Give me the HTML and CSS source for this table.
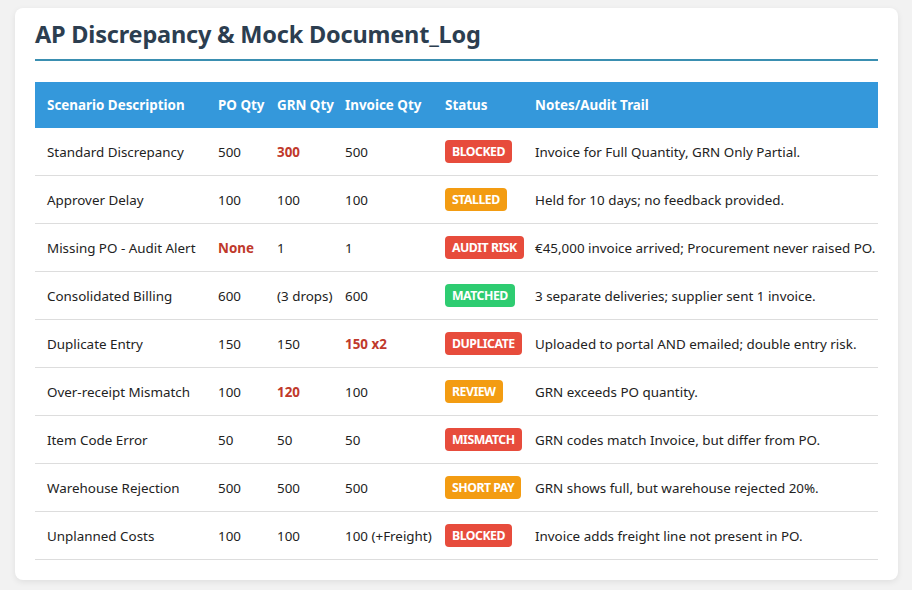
FILE: index.html
```html
<!DOCTYPE html>
<html>
<head>
<meta charset="utf-8">
<link rel="stylesheet" href="styles.css">
</head>
<body>
<div class="card">
  <h1 class="title">AP Discrepancy &amp; Mock Document_Log</h1>
  <table class="log">
    <colgroup>
      <col class="c-desc"><col class="c-po"><col class="c-grn"><col class="c-inv"><col class="c-status"><col class="c-notes">
    </colgroup>
    <thead>
      <tr><th>Scenario Description</th><th>PO Qty</th><th>GRN Qty</th><th>Invoice Qty</th><th>Status</th><th>Notes/Audit Trail</th></tr>
    </thead>
    <tbody>
      <tr><td>Standard Discrepancy</td><td>500</td><td class="alert">300</td><td>500</td><td><span class="badge red">BLOCKED</span></td><td>Invoice for Full Quantity, GRN Only Partial.</td></tr>
      <tr><td>Approver Delay</td><td>100</td><td>100</td><td>100</td><td><span class="badge orange">STALLED</span></td><td>Held for 10 days; no feedback provided.</td></tr>
      <tr><td>Missing PO - Audit Alert</td><td class="alert">None</td><td>1</td><td>1</td><td><span class="badge red">AUDIT RISK</span></td><td>€45,000 invoice arrived; Procurement never raised PO.</td></tr>
      <tr><td>Consolidated Billing</td><td>600</td><td>(3 drops)</td><td>600</td><td><span class="badge green">MATCHED</span></td><td>3 separate deliveries; supplier sent 1 invoice.</td></tr>
      <tr><td>Duplicate Entry</td><td>150</td><td>150</td><td class="alert">150 x2</td><td><span class="badge red">DUPLICATE</span></td><td>Uploaded to portal AND emailed; double entry risk.</td></tr>
      <tr><td>Over-receipt Mismatch</td><td>100</td><td class="alert">120</td><td>100</td><td><span class="badge orange">REVIEW</span></td><td>GRN exceeds PO quantity.</td></tr>
      <tr><td>Item Code Error</td><td>50</td><td>50</td><td>50</td><td><span class="badge red">MISMATCH</span></td><td>GRN codes match Invoice, but differ from PO.</td></tr>
      <tr><td>Warehouse Rejection</td><td>500</td><td>500</td><td>500</td><td><span class="badge orange">SHORT PAY</span></td><td>GRN shows full, but warehouse rejected 20%.</td></tr>
      <tr><td>Unplanned Costs</td><td>100</td><td>100</td><td>100 (+Freight)</td><td><span class="badge red">BLOCKED</span></td><td>Invoice adds freight line not present in PO.</td></tr>
    </tbody>
  </table>
</div>
</body>
</html>
```
FILE: styles.css
```css
html, body {
  margin: 0;
  padding: 0;
}
body {
  background: #f2f2f2;
  font-family: "Noto Sans", "Open Sans", sans-serif;
  color: #222;
  padding: 8px 14px 8px 15px;
}
.card {
  background: #fff;
  border-radius: 8px;
  box-shadow: 0 2px 6px rgba(0,0,0,0.08);
  padding: 13px 20px 20px 20px;
  width: 843px;
}
.title {
  margin: 0;
  font-size: 23.5px;
  font-weight: 700;
  color: #2c3e50;
  line-height: 26px;
  padding-bottom: 12px;
  border-bottom: 2px solid #3a8fb1;
  letter-spacing: -0.2px;
}
.log {
  margin-top: 21px;
  width: 100%;
  border-collapse: collapse;
  table-layout: fixed;
  font-size: 13.4px;
}
.c-desc { width: 171px; }
.c-po { width: 59px; }
.c-grn { width: 68px; }
.c-inv { width: 100px; }
.c-status { width: 90px; }
.c-notes { width: auto; }
.log th {
  background: #3498db;
  color: #fff;
  text-align: left;
  font-weight: 700;
  height: 46px;
  padding: 0 0 0 12px;
  white-space: nowrap;
}
.log td {
  height: 47px;
  padding: 0 0 0 12px;
  border-bottom: 1px solid #dddddd;
  white-space: nowrap;
  color: #222;
}
.log td.alert {
  color: #c0392b;
  font-weight: 700;
}
.badge {
  display: inline-block;
  color: #fff;
  font-weight: 700;
  font-size: 12.3px;
  line-height: 23px;
  padding: 0 7px;
  border-radius: 4px;
  letter-spacing: -0.5px;
}
.red { background: #e74c3c; }
.orange { background: #f39c12; }
.green { background: #2ecc71; }
```
